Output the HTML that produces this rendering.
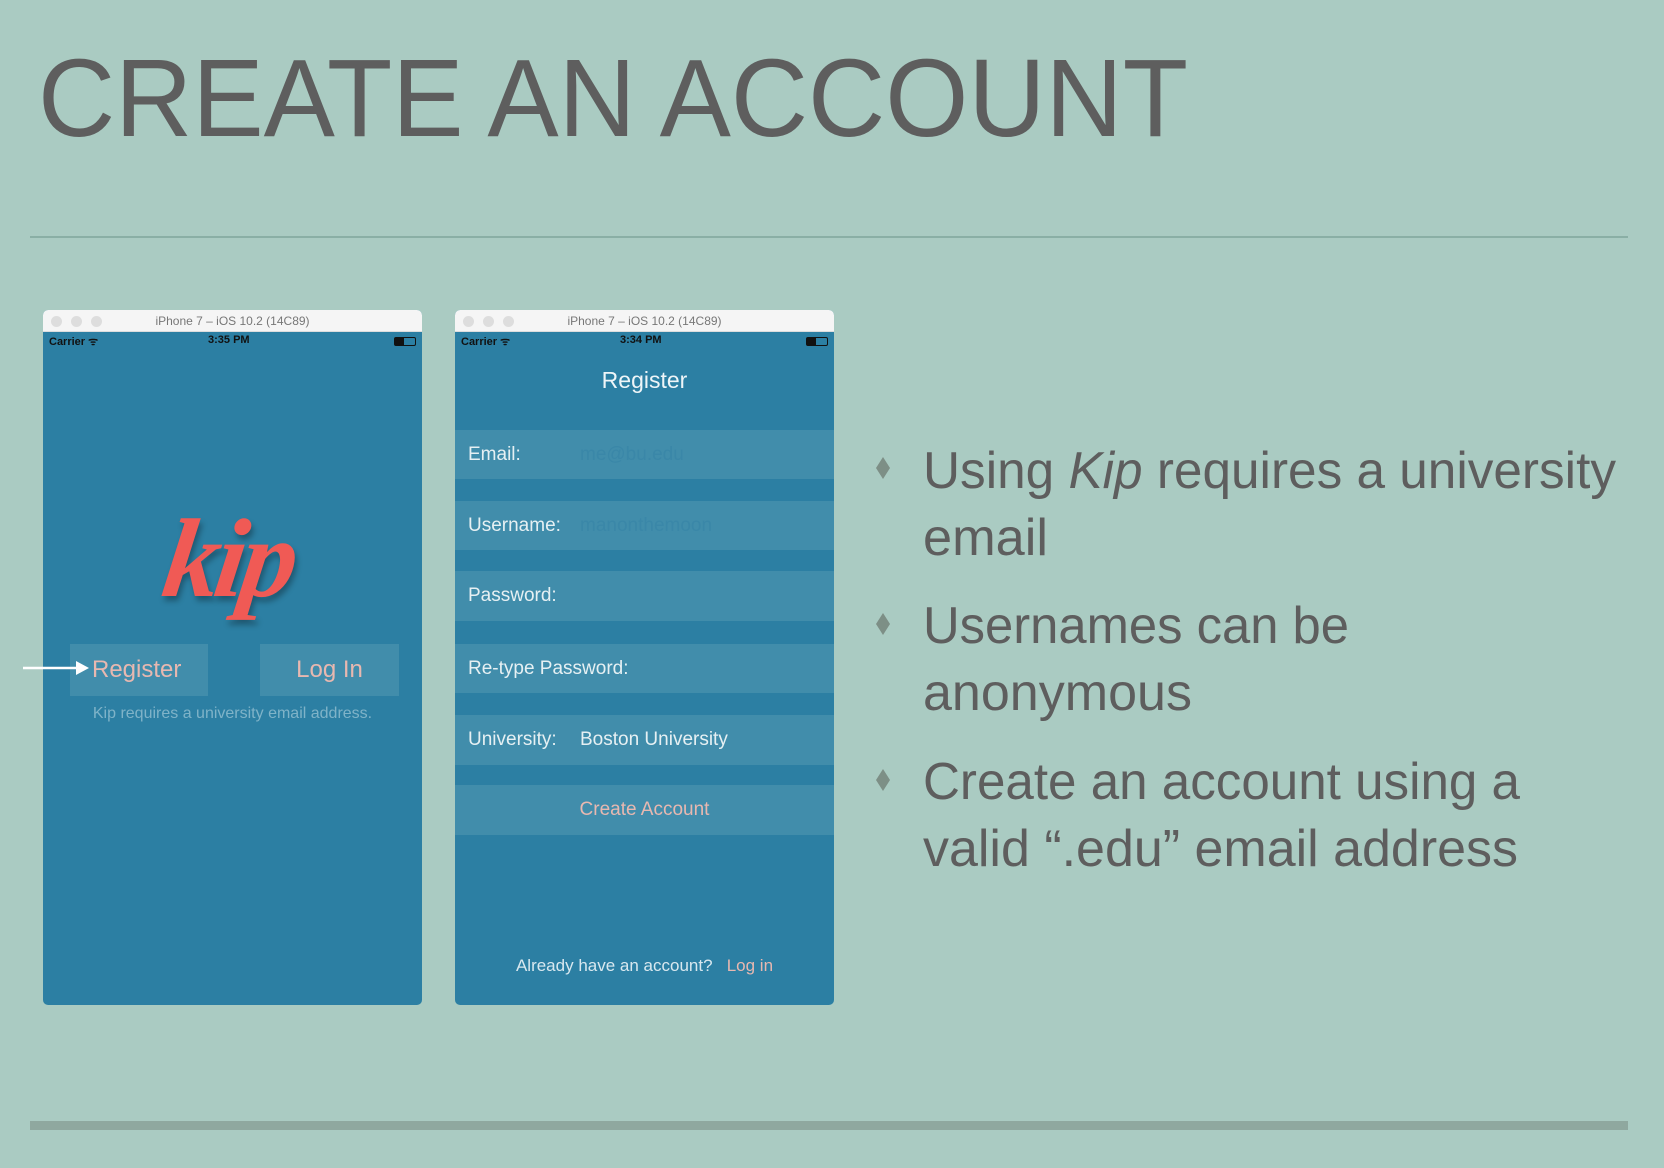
<!DOCTYPE html>
<html><head><meta charset="utf-8"><style>
*{margin:0;padding:0;box-sizing:border-box}
body{width:1664px;height:1168px;background:#aacbc2;position:relative;overflow:hidden;font-family:"Liberation Sans",sans-serif}
.abs{position:absolute}
.phone{position:absolute;top:310px;width:379px;height:695px;background:#2c7fa3;border-radius:5px;overflow:hidden}
.tb{position:absolute;left:0;top:0;width:100%;height:22px;background:#f5f5f5;border-bottom:1px solid #ddd;font-size:12px;color:#777;text-align:center;line-height:22px}
.dot{position:absolute;top:6px;width:11px;height:11px;border-radius:50%;background:#ddd}
.sb{position:absolute;top:24px;left:0;width:100%;height:16px;font-size:11px;color:#111;font-weight:bold}
.row{position:absolute;left:0;width:100%;background:#418dab;color:#e6f0f3;font-size:19px}
.row span{position:absolute;top:50%;transform:translateY(-50%)}
.ph{color:#3a87a8}
</style></head><body>
<svg class="abs" style="left:0;top:0" width="1664" height="1168">
<text x="38" y="136" font-family="Liberation Sans" font-size="110" fill="#5e5e5e" textLength="1150" lengthAdjust="spacingAndGlyphs">CREATE AN ACCOUNT</text>
<line x1="30" y1="237" x2="1628" y2="237" stroke="#7fa69b" stroke-width="1.5"/>
<rect x="30" y="1121" width="1598" height="9" fill="#8fa89f"/>
<g font-family="Liberation Sans" font-size="52" fill="#5e5e5e">
<text x="923" y="488" textLength="693" lengthAdjust="spacingAndGlyphs">Using <tspan font-style="italic">Kip</tspan> requires a university</text>
<text x="923" y="555" textLength="125" lengthAdjust="spacingAndGlyphs">email</text>
<text x="923" y="643" textLength="426" lengthAdjust="spacingAndGlyphs">Usernames can be</text>
<text x="923" y="710" textLength="269" lengthAdjust="spacingAndGlyphs">anonymous</text>
<text x="923" y="799" textLength="597" lengthAdjust="spacingAndGlyphs">Create an account using a</text>
<text x="923" y="866" textLength="595" lengthAdjust="spacingAndGlyphs">valid “.edu” email address</text>
</g>
<g fill="#7d8f86">
<path d="M883 457 l7 11 -7 11 -7 -11z"/><path d="M883 613 l7 11 -7 11 -7 -11z"/><path d="M883 769 l7 11 -7 11 -7 -11z"/>
</g>
</svg>

<div class="phone" style="left:43px">
 <div class="tb"><div class="dot" style="left:8px"></div><div class="dot" style="left:28px"></div><div class="dot" style="left:48px"></div>iPhone 7 – iOS 10.2 (14C89)</div>
 <div class="sb"><span class="abs" style="left:6px">Carrier ᯤ</span><span class="abs" style="left:165px">3:35 PM</span><span class="abs" style="right:6px;top:3px;width:22px;height:9px;border:1px solid #111;border-radius:2px"><span class="abs" style="left:0;top:0;width:9px;height:7px;background:#111"></span></span></div>
 <div class="abs" style="left:122px;top:185px;font-family:'Liberation Serif',serif;font-style:italic;font-weight:bold;font-size:112px;color:#f05a55;text-shadow:3px 5px 6px rgba(0,0,0,.3);letter-spacing:-5px;transform:skewX(-8deg)">kip</div>
 <div class="abs" style="left:27px;top:334px;width:138px;height:52px;background:#418dab;color:#e8b8b0;font-size:24px;line-height:52px;padding-left:22px">Register</div>
 <div class="abs" style="left:217px;top:334px;width:139px;height:52px;background:#418dab;color:#e8b8b0;font-size:24px;line-height:52px;text-align:center">Log In</div>
 <div class="abs" style="left:0;width:100%;top:395px;text-align:center;color:#7fb3c8;font-size:16px">Kip requires a university email address.</div>
</div>

<svg class="abs" style="left:0;top:650px" width="100" height="40">
<line x1="23" y1="18" x2="78" y2="18" stroke="#fff" stroke-width="2.5"/>
<path d="M76 11 L89 18 L76 25z" fill="#fff"/>
</svg>

<div class="phone" style="left:455px">
 <div class="tb"><div class="dot" style="left:8px"></div><div class="dot" style="left:28px"></div><div class="dot" style="left:48px"></div>iPhone 7 – iOS 10.2 (14C89)</div>
 <div class="sb"><span class="abs" style="left:6px">Carrier ᯤ</span><span class="abs" style="left:165px">3:34 PM</span><span class="abs" style="right:6px;top:3px;width:22px;height:9px;border:1px solid #111;border-radius:2px"><span class="abs" style="left:0;top:0;width:9px;height:7px;background:#111"></span></span></div>
 <div class="abs" style="left:0;width:100%;top:57px;text-align:center;color:#eef5f8;font-size:23px">Register</div>
 <div class="row" style="top:120px;height:49px"><span style="left:13px">Email:</span><span class="ph" style="left:125px">me@bu.edu</span></div>
 <div class="row" style="top:191px;height:49px"><span style="left:13px">Username:</span><span class="ph" style="left:125px">manonthemoon</span></div>
 <div class="row" style="top:261px;height:50px"><span style="left:13px">Password:</span></div>
 <div class="row" style="top:334px;height:49px"><span style="left:13px">Re-type Password:</span></div>
 <div class="row" style="top:405px;height:50px"><span style="left:13px">University:</span><span style="left:125px">Boston University</span></div>
 <div class="row" style="top:475px;height:50px;color:#e8b8b0"><span style="left:0;width:100%;text-align:center">Create Account</span></div>
 <div class="abs" style="left:0;width:100%;top:646px;text-align:center;color:#d8e8ef;font-size:17px">Already have an account? &nbsp; <span style="color:#e8b8b0">Log in</span></div>
</div>
</body></html>
